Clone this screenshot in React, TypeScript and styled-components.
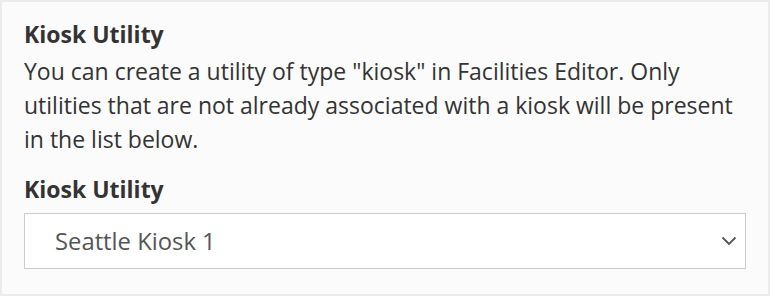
import styled, { createGlobalStyle } from 'styled-components'

const GlobalStyle = createGlobalStyle`
  html, body {
    margin: 0;
    padding: 0;
    background: #ffffff;
  }
  * {
    box-sizing: border-box;
  }
`

const Panel = styled.section`
  width: 770px;
  height: 296px;
  border: 2px solid #ececec;
  background-color: #fbfbfb;
  padding: 16px 22px 0;
  font-family: 'Open Sans', 'Noto Sans', sans-serif;
  color: #333333;
`

const Title = styled.h3`
  margin: 0;
  font-size: 23px;
  font-weight: 700;
  line-height: 32px;
  color: #333333;
`

const Description = styled.p`
  margin: 4px 0 0;
  font-size: 23px;
  line-height: 34px;
  color: #333333;
`

const Field = styled.div`
  margin-top: 17px;
  display: flex;
  flex-direction: column;
  gap: 8px;
`

const Label = styled.label`
  font-size: 23px;
  font-weight: 700;
  line-height: 32px;
  color: #333333;
`

const SelectWrap = styled.div`
  position: relative;
  width: 722px;
`

const Select = styled.select`
  appearance: none;
  width: 100%;
  height: 56px;
  padding: 0 48px 0 30px;
  border: 1px solid #cccccc;
  border-radius: 0;
  background: #ffffff;
  font-family: 'Open Sans', 'Noto Sans', sans-serif;
  font-size: 23.8px;
  color: #555555;
  outline: none;
`

const Chevron = styled.svg`
  position: absolute;
  right: 9px;
  top: 50%;
  transform: translateY(-50%);
  pointer-events: none;
`

const App = () => {
  return (
    <>
      <GlobalStyle />
      <Panel>
        <Title>Kiosk Utility</Title>
        <Description>
          You can create a utility of type "kiosk" in Facilities Editor. Only
          utilities that are not already associated with a kiosk will be present
          in the list below.
        </Description>
        <Field>
          <Label htmlFor="kiosk-utility">Kiosk Utility</Label>
          <SelectWrap>
            <Select id="kiosk-utility" defaultValue="seattle-1">
              <option value="seattle-1">Seattle Kiosk 1</option>
            </Select>
            <Chevron width="16" height="10" viewBox="0 0 16 10" fill="none">
              <path d="M1.5 1.5 L8 8 L14.5 1.5" stroke="#555555" strokeWidth="1.8" />
            </Chevron>
          </SelectWrap>
        </Field>
      </Panel>
    </>
  )
}

export default App
